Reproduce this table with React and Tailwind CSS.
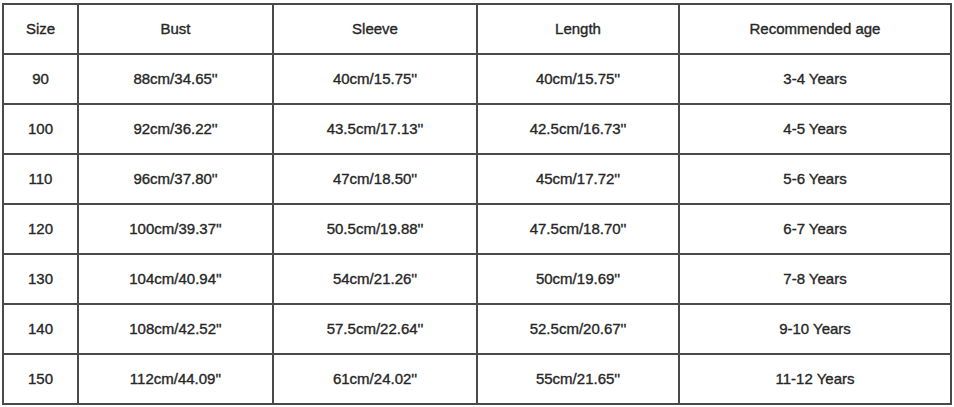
const headers = ["Size", "Bust", "Sleeve", "Length", "Recommended age"];

const rows = [
  ["90", "88cm/34.65''", "40cm/15.75''", "40cm/15.75''", "3-4 Years"],
  ["100", "92cm/36.22''", "43.5cm/17.13''", "42.5cm/16.73''", "4-5 Years"],
  ["110", "96cm/37.80''", "47cm/18.50''", "45cm/17.72''", "5-6 Years"],
  ["120", "100cm/39.37''", "50.5cm/19.88''", "47.5cm/18.70''", "6-7 Years"],
  ["130", "104cm/40.94''", "54cm/21.26''", "50cm/19.69''", "7-8 Years"],
  ["140", "108cm/42.52''", "57.5cm/22.64''", "52.5cm/20.67''", "9-10 Years"],
  ["150", "112cm/44.09''", "61cm/24.02''", "55cm/21.65''", "11-12 Years"],
];

const widths = ["w-[75px]", "w-[195px]", "w-[204px]", "w-[202px]", "w-[272px]"];

export default function App() {
  return (
    <div className="w-[954px] h-[407px] bg-white pl-[2px] pt-[3px] font-['Liberation_Sans',Arial,sans-serif]">
      <table className="border-collapse table-fixed w-[950px] text-[15px] text-[#262626] [-webkit-text-stroke:0.35px_#262626]">
        <thead>
          <tr className="h-[50px]">
            {headers.map((h, i) => (
              <th key={h} className={`${widths[i]} border-2 border-[#4a4a4a] font-normal text-center align-middle`}>
                {h}
              </th>
            ))}
          </tr>
        </thead>
        <tbody>
          {rows.map((r) => (
            <tr key={r[0]} className="h-[50px]">
              {r.map((c, i) => (
                <td key={i} className="border-2 border-[#4a4a4a] text-center align-middle">
                  {c}
                </td>
              ))}
            </tr>
          ))}
        </tbody>
      </table>
    </div>
  );
}
